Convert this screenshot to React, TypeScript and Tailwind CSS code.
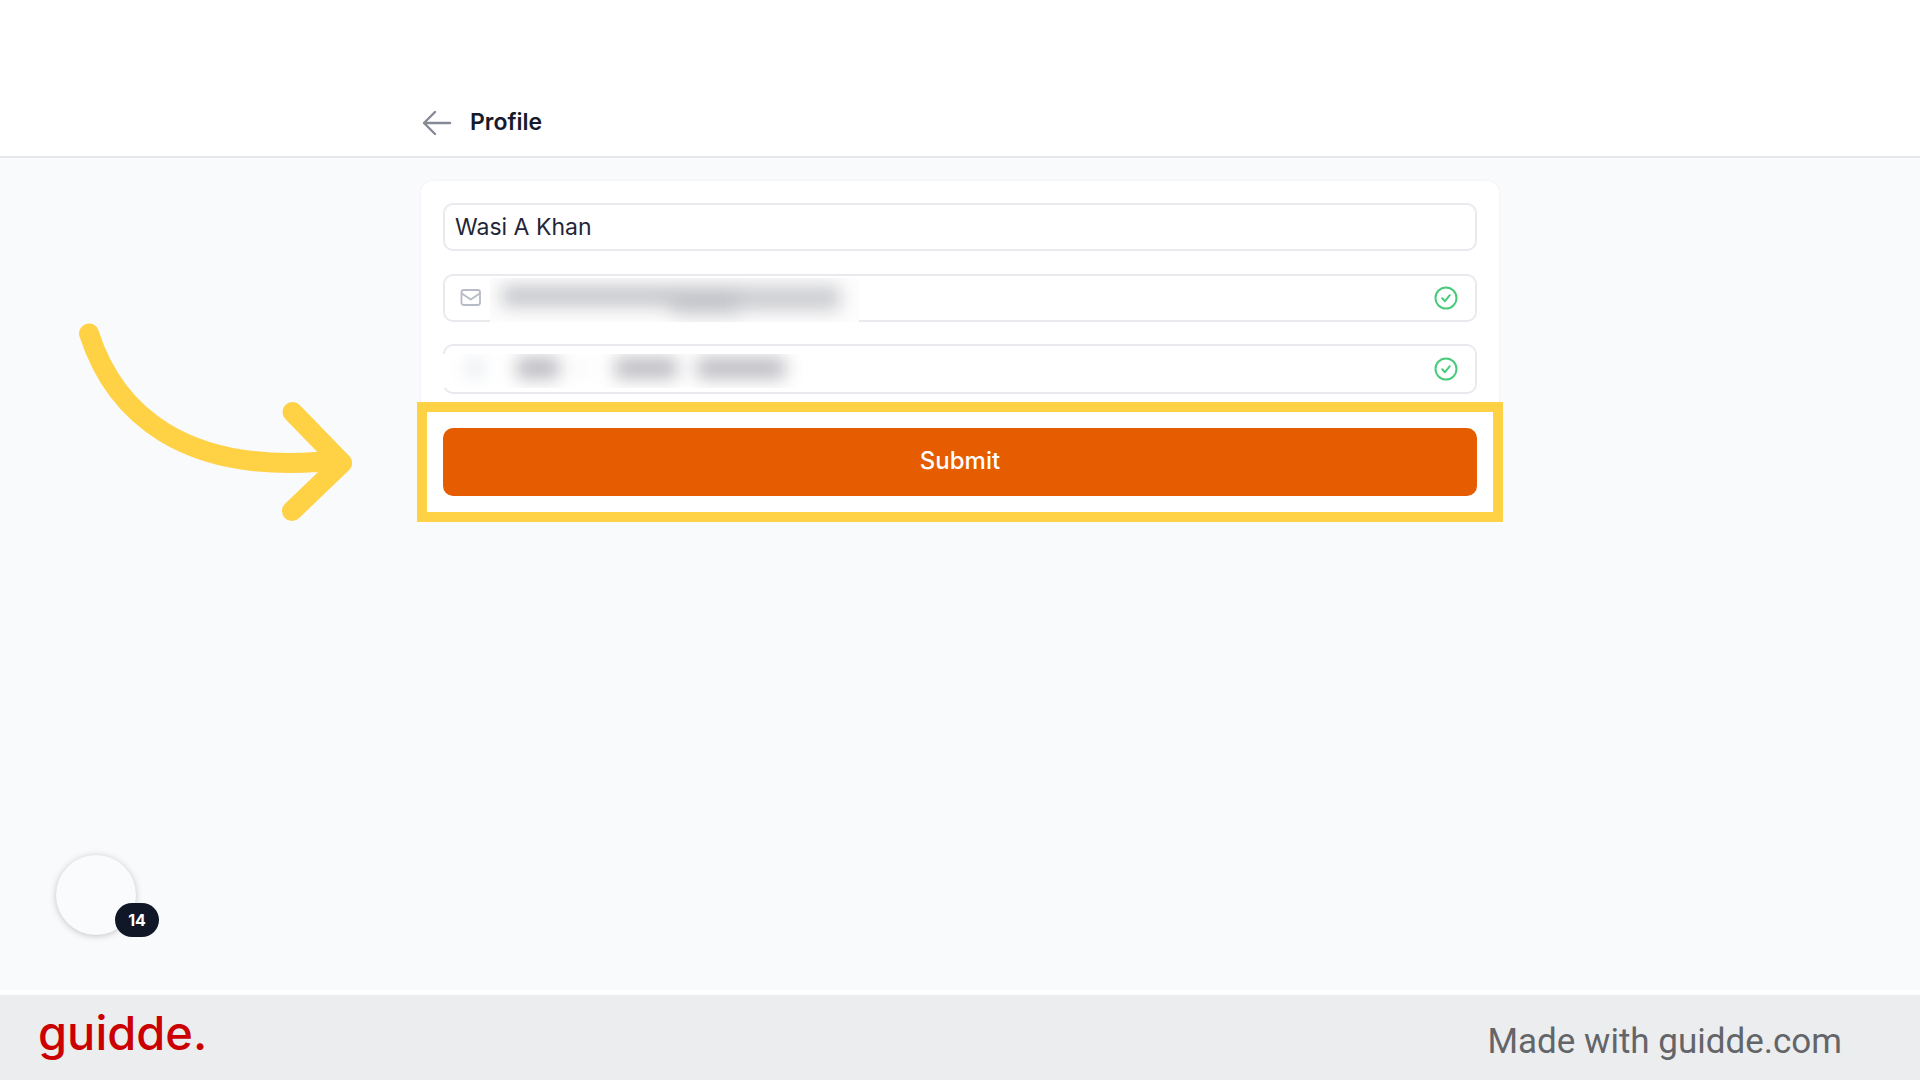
import React from 'react';

function CheckBadge() {
  return (
    <svg className="mr-[17px] h-6 w-6 shrink-0" viewBox="0 0 24 24" fill="none" stroke="#49cb7b" strokeWidth="2" strokeLinecap="round" strokeLinejoin="round" role="img" aria-label="Verified">
      <circle cx="12" cy="12" r="10.5" />
      <path d="M8.2 12.2 11 15.2 15.8 9.2" />
    </svg>
  );
}

function MailIcon() {
  return (
    <svg className="ml-3.5 h-5 w-6 shrink-0" viewBox="0 0 24 20" fill="none" stroke="#b6bbc6" strokeWidth="1.8" strokeLinecap="round" strokeLinejoin="round" aria-hidden="true">
      <rect x="2.5" y="2" width="18.5" height="15" rx="2.2" />
      <path d="M2.8 5.5 11.75 11.5 20.7 5.5" />
    </svg>
  );
}

function EmailMask() {
  return (
    <div className="absolute -bottom-0.5 left-[45px] top-0.5 w-[369px] overflow-hidden bg-[#fdfdfd]" aria-hidden="true">
      <div className="ml-3 mt-2 flex h-5 w-[338px] blur-[9px]">
        <div className="w-1/2 bg-[#c2c3c8]" />
        <div className="h-7 w-1/5 bg-[#c2c3c8]" />
        <div className="h-6 flex-1 bg-[#cacbcf]" />
      </div>
    </div>
  );
}

function PhoneMask() {
  return (
    <div className="absolute -left-2 bottom-1 top-2 w-[370px] overflow-hidden bg-white" aria-hidden="true">
      <div className="flex h-7 items-center pl-[30px] blur-[9px]">
        <div className="h-4 w-4 bg-[#e3e7ec]" />
        <div className="ml-[34px] h-5 w-[42px] bg-[#b6b6bc]" />
        <div className="ml-5 h-3 w-2 bg-[#eeeef0]" />
        <div className="ml-[28px] h-5 w-[62px] bg-[#b8b8be]" />
        <div className="ml-5 h-5 w-[88px] bg-[#b8b8be]" />
      </div>
    </div>
  );
}

const inputText = 'min-w-0 flex-1 rounded-[10px] bg-transparent px-2.5 text-[23px] text-[#1f2638] outline-none';
const fieldBox = 'relative flex items-center rounded-[10px] border-2 border-[#e8eaee] bg-white';

export default function App() {
  return (
    <div className="flex min-h-screen flex-col bg-white font-['Inter',sans-serif]">
      <header className="flex h-[158px] items-end border-b-2 border-[#e6e8eb] bg-white">
        <div className="mx-auto flex w-full max-w-[1080px] items-center pb-4">
          <button type="button" aria-label="Back" className="shrink-0">
            <svg className="h-8 w-8" viewBox="0 0 32 32" fill="none" stroke="#858a96" strokeWidth="2.4" strokeLinecap="round" strokeLinejoin="round" aria-hidden="true">
              <path d="M30 16H4M15 5 4 16l11 11" />
            </svg>
          </button>
          <h1 className="ml-[18px] pb-0.5 text-[23px] font-semibold leading-8 text-[#151b2c]">Profile</h1>
        </div>
      </header>

      <main className="relative flex-1 bg-[#f9fafc] pt-[23px]">
        <form className="mx-auto w-full max-w-[1078px] rounded-xl bg-white p-[22px] shadow-[0_0_3px_rgba(20,30,50,0.06)]" onSubmit={(e) => e.preventDefault()}>
          <div className={fieldBox + ' h-12'}>
            <input aria-label="Full name" className={inputText + ' h-11'} defaultValue="Wasi A Khan" />
          </div>
          <div className={fieldBox + ' mt-[23px] h-12'}>
            <MailIcon />
            <input type="email" aria-label="Email" className={inputText} />
            <EmailMask />
            <CheckBadge />
          </div>
          <div className={fieldBox + ' mt-[22px] h-[50px]'}>
            <input type="tel" aria-label="Phone" className={inputText} />
            <PhoneMask />
            <CheckBadge />
          </div>
          <div className="relative mt-[34px]">
            <button type="submit" className="h-[68px] w-full rounded-[10px] bg-[#e65c00] pb-0.5 text-[24px] font-medium text-white">
              Submit
            </button>
            <div className="pointer-events-none absolute -inset-[26px] border-10 border-[#ffd145]" aria-hidden="true" />
          </div>
        </form>

        <svg className="pointer-events-none absolute left-[60px] top-[142px] h-[240px] w-[320px]" viewBox="0 0 320 240" fill="none" stroke="#ffd145" strokeWidth="20" strokeLinecap="round" strokeLinejoin="round" aria-hidden="true">
          <path d="M29 33.5C56 117 127 171 257 162L282 163" />
          <path d="M232.5 112 282 163 232 211" />
        </svg>

        <button type="button" aria-label="Open checklist, 14 items" className="absolute bottom-[55px] left-14 h-20 w-20 rounded-full bg-[#fafbfc] shadow-[0_1px_7px_rgba(0,0,0,0.22)]">
          <span className="absolute -bottom-0.5 left-[59px] flex h-[34px] w-11 items-center justify-center rounded-full bg-[#101828] text-base font-bold text-white">14</span>
        </button>
      </main>

      <footer className="flex h-[90px] items-center justify-between border-t-5 border-white bg-[#ecedef] pl-[38px] pr-[78px]">
        <div className="pb-2.5 text-[47px] font-medium leading-none text-[#cb0000]">guidde.</div>
        <p className="pt-2 font-['Roboto',sans-serif] text-[35px] leading-none text-[#636569]">Made with guidde.com</p>
      </footer>
    </div>
  );
}
